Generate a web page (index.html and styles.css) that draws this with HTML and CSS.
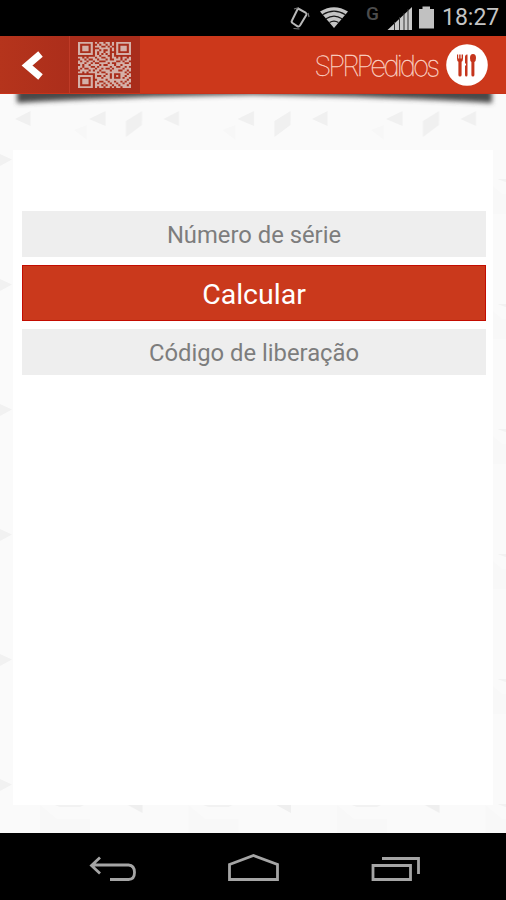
FILE: index.html
```html
<!DOCTYPE html>
<html lang="pt-BR">
<head>
  <meta charset="UTF-8">
  <meta name="viewport" content="width=device-width, initial-scale=1.0">
  <title>SPRPedidos</title>
  <link rel="stylesheet" href="styles.css">
</head>
<body>
  <div class="status-bar">
    <svg class="status-icons" width="156" height="36" viewBox="0 0 156 36">
      <g fill="none" stroke="#b9b9b9">
        <path d="M19 9 L25.500 12.500 Q27 13.500 26.300 15 L20 25.500 Q19 27 17.500 26.300 L12.500 23 Q11 22 12 20.500 L17.300 9.700 Q18 8.300 19 9 Z" stroke-width="2"/>
        <path d="M14 9 L19 7.500 M13.500 28.500 L19.500 29 M28 13 L29 17" stroke-width="1.200" stroke="#777"/>
      </g>
      <path d="M54 28 L40 11.500 Q54 3 68 11.500 Z" fill="#c4c4c4"/>
      <path d="M42.500 14.800 Q54 7.500 65.500 14.800 M46 18.800 Q54 13.500 62 18.800 M49.500 22.600 Q54 19.500 58.500 22.600" fill="none" stroke="#161616" stroke-width="1.200"/>
      <path d="M107.500 30 L132 7 V30 Z" fill="#c9c9c9"/>
      <path d="M114.500 22 V30 M119.500 17 V30 M124 13 V30 M128 9 V30" stroke="#333" stroke-width="1"/>
      <path d="M139 9 H142.500 V6.500 H150 V9 H154 V28.500 H139 Z" fill="#c1c1c1"/>
    </svg>
    <span class="network">G</span>
    <span class="clock">18:27</span>
  </div>

  <header class="header">
    <button class="back" aria-label="Voltar">
      <svg width="24" height="30" viewBox="0 0 24 30">
        <path d="M20.500 4 L7 15.500 L20.500 27" fill="none" stroke="#fff" stroke-width="7"/>
      </svg>
    </button>
    <button class="scan" aria-label="QR Code">
      <svg id="qr" width="53" height="46" viewBox="0 0 25 25" preserveAspectRatio="none"></svg>
    </button>
    <div class="brand">
      <span class="brand-name">SPRPedidos</span>
      <svg width="42" height="42" viewBox="0 0 42 42">
        <circle cx="21" cy="21" r="20.800" fill="#fff"/>
        <g fill="#c5351c">
          <path d="M11 10.500 h1.200 v4 h1 v-4 h1.400 v4 h1 v-4 h1.400 v4 q0 2.500 -1.400 3.200 V31 q0 1.500 -1.600 1.500 T12.400 31 V17.700 Q11 17 11 14.500 Z"/>
          <path d="M19 12.500 Q19.500 10 21.500 10.500 V31 q0 1.500 -1.200 1.500 T19 31 V21.500 h1 v-2 h-1 Z"/>
          <path d="M27 10 q3 0 3 4 q0 3.200 -1.600 4 V31 q0 1.500 -1.500 1.500 T25.400 31 V18 Q24 17.200 24 14 q0 -4 3 -4 Z"/>
        </g>
      </svg>
    </div>
  </header>

  <main class="page">
    <svg class="backdrop" width="506" height="739">
      <defs>
        <pattern id="facets" width="148.500" height="125" patternUnits="userSpaceOnUse">
          <path d="M0 60 L12 65.500 L0 72 Z" fill="#f1f1f1"/>
          <path d="M15 25 L30.500 17 V32 Z M89 25 L105.500 17 V32 Z" fill="#f0f0f0"/>
          <path d="M126 27 L142 17 V31 L126 43 Z" fill="#f0f0f0"/>
          <path d="M74 36 L87 31 V46 Z" fill="#f7f7f7"/>
          <path d="M126 85 H142.500 V94 Z" fill="#efefef"/>
          <path d="M52 85 H86 L80 88 H60 Z" fill="#f2f2f2"/>
          <path d="M40 86 L57 100 H90 V120 H40 Z" fill="#f8f8f8"/>
        </pattern>
        <filter id="soft" x="-5%" y="-100%" width="110%" height="300%">
          <feGaussianBlur stdDeviation="2.800"/>
        </filter>
      </defs>
      <rect width="506" height="739" fill="url(#facets)"/>
      <path d="M17 -6 H492 V9 Q400 3 253 .5 Q110 3 17 9 Z" fill="#4a4a4a" filter="url(#soft)"/>
    </svg>
    <form class="card">
      <input class="field" type="text" placeholder="Número de série">
      <button class="submit" type="button">Calcular</button>
      <input class="field" type="text" placeholder="Código de liberação" readonly>
    </form>
  </main>

  <nav class="nav-bar">
    <svg width="506" height="67" viewBox="0 0 506 67" fill="none" stroke="#a5a5a5" stroke-width="2.800">
      <path d="M100 24.500 L91.500 32.500 L100 40.500 M92 32 H128.500 Q134.500 32.500 134.500 39.500 Q134.500 46.500 128.500 46.500 H110"/>
      <path d="M229.500 31.500 L253.500 22.500 L277.500 31.500 V46.500 H229.500 Z"/>
      <path d="M373 32.500 H410.500 V46.500 H373 Z M382 25.500 H418.500 V41"/>
    </svg>
  </nav>

  <script src="qr.js"></script>
</body>
</html>
```
FILE: styles.css
```css
* {
  box-sizing: border-box;
}
body {
  margin: 0;
  height: 900px;
  display: flex;
  flex-direction: column;
  font-family: Roboto, "Liberation Sans", sans-serif;
  background: #fafafa;
}
button {
  border: 0;
  padding: 0;
  font-family: inherit;
}
svg {
  display: block;
}
.status-bar {
  position: relative;
  height: 36px;
  flex: none;
  display: flex;
  justify-content: flex-end;
  align-items: center;
  padding-right: 7px;
  background: #000;
}
.status-icons {
  margin-right: 6px;
}
.network {
  position: absolute;
  left: 366px;
  top: 2px;
  font-size: 19px;
  font-weight: 500;
  color: #4c4c4c;
}
.clock {
  width: 57px;
  font-size: 23px;
  line-height: 38px;
  color: #c4c4c4;
  white-space: nowrap;
}
.header {
  position: relative;
  z-index: 1;
  height: 58px;
  flex: none;
  display: flex;
  background: #cc381b;
  border-bottom: 1px solid #c8331a;
}
.back,
.scan {
  width: 70px;
  display: flex;
  align-items: center;
  justify-content: center;
}
.back {
  background: linear-gradient(90deg, #b5341c, #ac2e1b);
  border-right: 1px solid #bf3b27;
  padding-right: 6px;
}
.scan {
  background: #a92d1b;
  padding-right: 2px;
}
.brand {
  flex: 1;
  display: flex;
  align-items: center;
  justify-content: flex-end;
  gap: 9px;
  padding-right: 18px;
}
.brand-name {
  padding-top: 2px;
  font-family: Inter, Roboto, sans-serif;
  font-size: 28px;
  font-weight: 100;
  letter-spacing: -3px;
  -webkit-text-stroke: 0.3px #fbd3c5;
  color: #fbd3c5;
}
.page {
  position: relative;
  flex: 1;
  padding: 56px 13px 28px;
}
.backdrop {
  position: absolute;
  left: 0;
  top: 0;
}
.card {
  position: relative;
  height: 655px;
  padding: 61px 7px 0 9px;
  display: flex;
  flex-direction: column;
  gap: 8px;
  background: #fff;
}
.field {
  height: 46px;
  flex: none;
  border: 0;
  padding: 2px 0 0;
  background: #eee;
  font-family: inherit;
  font-size: 23.8px;
  text-align: center;
  color: #7d7d7d;
}
.field::placeholder {
  color: #7d7d7d;
}
.submit {
  height: 56px;
  flex: none;
  padding-top: 2px;
  border: 1px solid #c30c00;
  background: #ca391c;
  color: #fff;
  font-size: 28.5px;
}
.nav-bar {
  height: 67px;
  flex: none;
  background: #000;
}
```
FILE: qr.js
```js
const rows = [
  "1111111010110110101111111",
  "1000001001011010101000001",
  "1011101011100101001011101",
  "1011101000111110101011101",
  "1011101011010010101011101",
  "1000001010110110001000001",
  "1111111010101010101111111",
  "0000000011011100100000000",
  "1101011101100110110101101",
  "0110100110111010011101011",
  "1011011011000111110010110",
  "1110110100111101001111001",
  "0101101111010011101101111",
  "1101110010111110110011010",
  "1010011101101001011110111",
  "0111101011011110111001101",
  "1101011110100111111111010",
  "0000000011111010100011101",
  "1111111010010110101011011",
  "1000001011101110100010110",
  "1011101001111011111111101",
  "1011101011001101101101011",
  "1011101010110110110110110",
  "1000001011101011011011101",
  "1111111010110110101101111"
];

let d = "";
rows.forEach((row, y) => {
  [...row].forEach((cell, x) => {
    if (cell === "1") d += `M${x} ${y}h1v1h-1z`;
  });
});

const path = document.createElementNS("http://www.w3.org/2000/svg", "path");
path.setAttribute("d", d);
path.setAttribute("fill", "#d5b0a8");
document.getElementById("qr").appendChild(path);
```
